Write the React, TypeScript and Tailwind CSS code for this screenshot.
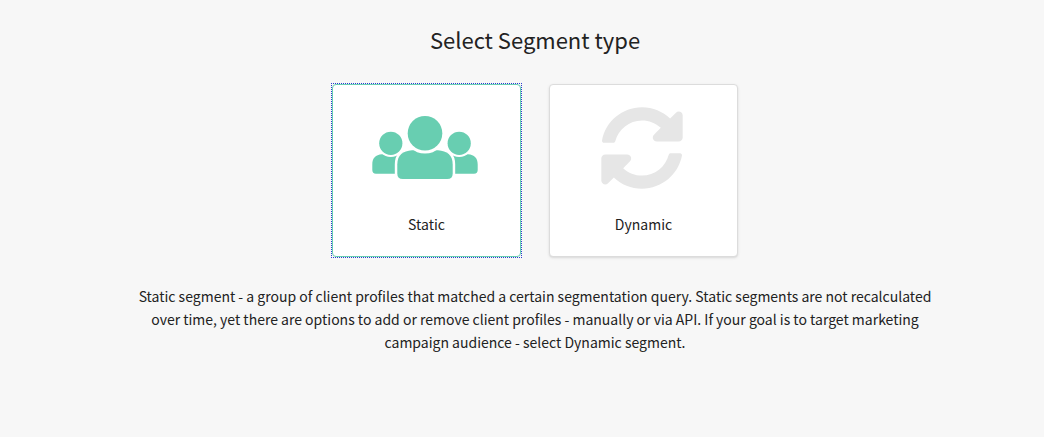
import { useState } from 'react';
import type { ReactNode } from 'react';
import { FaSyncAlt } from 'react-icons/fa';

function PeopleIcon() {
  return (
    <svg viewBox="0 0 106 64" className="h-16 w-[106px]" fill="currentColor" stroke="white" aria-hidden="true">
      <g stroke="none">
        <path d="M10 38.3h16v19.4H4Q.3 57.700.3 54V48.500C.3 42 3.500 39 10 38.300z" />
        <path d="M96 38.3H80v19.4h22Q105.700 57.700 105.700 54V48.500C105.700 42 102.500 39 96 38.300z" />
      </g>
      <g strokeWidth="4" paintOrder="stroke">
        <circle cx="18.8" cy="27.3" r="11.6" />
        <circle cx="87.2" cy="27.3" r="11.6" />
      </g>
      <path
        strokeWidth="5"
        paintOrder="stroke"
        d="M40 34.3h26C75 35 80.700 39 80.700 48.500V57.500Q80.700 63 75.200 63H30.800Q25.300 63 25.300 57.500V48.500C25.300 39 31 35 40 34.300z"
      />
      <circle cx="53" cy="17.300" r="17.300" strokeWidth="6" paintOrder="stroke" />
    </svg>
  );
}

type SegmentType = 'static' | 'dynamic';

interface CardProps {
  label: string;
  selected: boolean;
  onSelect: () => void;
  children: ReactNode;
}

function SegmentCard({ label, selected, onSelect, children }: CardProps) {
  return (
    <div className={selected ? 'outline-1 outline-dotted outline-[#2a3fd0]' : ''}>
      <button
        type="button"
        aria-pressed={selected}
        onClick={onSelect}
        className={
          'flex w-[189px] flex-col items-center rounded border bg-white pb-5 text-[14px] leading-6 outline-none ' +
          (selected ? 'border-[#68ceb1]' : 'border-[#dcdcdc] shadow-sm')
        }
      >
        <span className="flex h-[127px] items-center justify-center pr-[3px] pb-px">{children}</span>
        {label}
      </button>
    </div>
  );
}

export default function App() {
  const [type, setType] = useState<SegmentType>('static');
  return (
    <main className="flex min-h-screen flex-col items-center bg-[#f7f7f7] pt-[23px] pl-[26px] font-['Noto_Sans_CJK_SC','Noto_Sans',sans-serif] text-[#222]">
      <h1 className="text-[22px] leading-8">Select Segment type</h1>
      <div className="mt-[29px] flex gap-7">
        <SegmentCard label="Static" selected={type === 'static'} onSelect={() => setType('static')}>
          <span className="text-[#68ceb1]">
            <PeopleIcon />
          </span>
        </SegmentCard>
        <SegmentCard label="Dynamic" selected={type === 'dynamic'} onSelect={() => setType('dynamic')}>
          <FaSyncAlt className="size-[84px] text-[#e6e6e6]" aria-hidden="true" />
        </SegmentCard>
      </div>
      <p className="mt-7 max-w-[820px] text-center text-[14px] leading-[23px]">
        Static segment - a group of client profiles that matched a certain segmentation query. Static segments are not
        recalculated over time, yet there are options to add or remove client profiles - manually or via API. If your
        goal is to target marketing campaign audience - select Dynamic segment.
      </p>
    </main>
  );
}
